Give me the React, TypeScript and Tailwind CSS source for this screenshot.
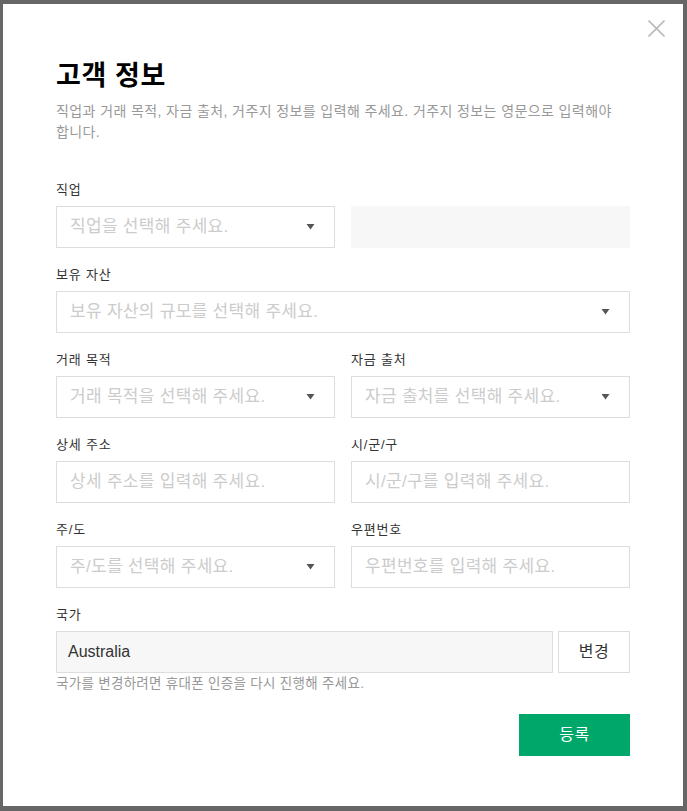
import React from 'react';

const font = { fontFamily: '"Liberation Sans", "Noto Sans CJK KR", sans-serif' };

function Label({ children }: { children: React.ReactNode }) {
  return <div className="text-[13px] leading-[20px] text-[#333] tracking-[0.8px] mb-[6px]">{children}</div>;
}

function Arrow() {
  return (
    <svg width="9" height="6" viewBox="0 0 9 6" className="shrink-0">
      <path d="M0.5 0 L8.5 0 L4.5 5.5 Z" fill="#555" />
    </svg>
  );
}

function Select({ placeholder }: { placeholder: string }) {
  return (
    <div className="h-[42px] border border-[#ddd] bg-white flex items-center justify-between pl-[13px] pr-[19px]">
      <span className="text-[17px] leading-[20px] text-[#ccc] tracking-[0.3px]">{placeholder}</span>
      <Arrow />
    </div>
  );
}

function TextInput({ placeholder }: { placeholder: string }) {
  return (
    <div className="h-[42px] border border-[#ddd] bg-white flex items-center pl-[13px]">
      <span className="text-[17px] leading-[20px] text-[#ccc] tracking-[0.3px]">{placeholder}</span>
    </div>
  );
}

function Field({ label, children }: { label: string; children: React.ReactNode }) {
  return (
    <div className="flex flex-col">
      <Label>{label}</Label>
      {children}
    </div>
  );
}

export default function App() {
  return (
    <div className="min-h-screen w-full bg-[#666] pt-[4px] pl-[3px]" style={font}>
      <div className="relative w-[680px] h-[802px] bg-white px-[53px] pt-[54px]">
        {/* close */}
        <button className="absolute top-[16px] right-[18px] w-[17px] h-[17px]">
          <svg width="17" height="17" viewBox="0 0 17 17">
            <path d="M0.5 0.5 L16.5 16.5 M16.5 0.5 L0.5 16.5" stroke="#bbb" strokeWidth="1.6" />
          </svg>
        </button>

        <h1 className="text-[27px] leading-[36px] font-bold text-black tracking-[0.6px]">고객 정보</h1>
        <p className="mt-[7px] text-[14px] leading-[21px] text-[#999] tracking-[0.4px] break-keep">
          직업과 거래 목적, 자금 출처, 거주지 정보를 입력해 주세요. 거주지 정보는 영문으로 입력해야 합니다.
        </p>

        <div className="mt-[37px] flex flex-col gap-[17px]">
          <div className="grid grid-cols-2 gap-x-[16px]">
            <Field label="직업">
              <Select placeholder="직업을 선택해 주세요." />
            </Field>
            <div className="flex flex-col">
              <div className="h-[20px] mb-[6px]" />
              <div className="h-[42px] bg-[#f7f7f7]" />
            </div>
          </div>

          <Field label="보유 자산">
            <Select placeholder="보유 자산의 규모를 선택해 주세요." />
          </Field>

          <div className="grid grid-cols-2 gap-x-[16px]">
            <Field label="거래 목적">
              <Select placeholder="거래 목적을 선택해 주세요." />
            </Field>
            <Field label="자금 출처">
              <Select placeholder="자금 출처를 선택해 주세요." />
            </Field>
          </div>

          <div className="grid grid-cols-2 gap-x-[16px]">
            <Field label="상세 주소">
              <TextInput placeholder="상세 주소를 입력해 주세요." />
            </Field>
            <Field label="시/군/구">
              <TextInput placeholder="시/군/구를 입력해 주세요." />
            </Field>
          </div>

          <div className="grid grid-cols-2 gap-x-[16px]">
            <Field label="주/도">
              <Select placeholder="주/도를 선택해 주세요." />
            </Field>
            <Field label="우편번호">
              <TextInput placeholder="우편번호를 입력해 주세요." />
            </Field>
          </div>

          <div className="flex flex-col">
            <Label>국가</Label>
            <div className="flex gap-[5px]">
              <div className="flex-1 h-[42px] border border-[#ddd] bg-[#f7f7f7] flex items-center pl-[11px]">
                <span className="text-[16px] leading-[20px] text-[#333]">Australia</span>
              </div>
              <button className="w-[72px] h-[42px] border border-[#ddd] bg-white text-[16px] text-[#333] tracking-[0.5px]">
                변경
              </button>
            </div>
            <div className="mt-[2px] text-[13.5px] leading-[18px] text-[#999] tracking-[0.3px]">
              국가를 변경하려면 휴대폰 인증을 다시 진행해 주세요.
            </div>
          </div>
        </div>

        <div className="mt-[21px] flex justify-end">
          <button className="w-[111px] h-[42px] bg-[#00a76a] text-white text-[16px] tracking-[0.5px]">등록</button>
        </div>
      </div>
    </div>
  );
}
